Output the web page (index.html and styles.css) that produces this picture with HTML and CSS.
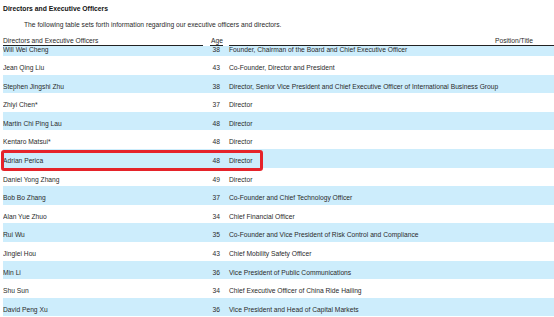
FILE: index.html
```html
<!DOCTYPE html>
<html>
<head>
<meta charset="utf-8">
<link rel="stylesheet" href="styles.css">
</head>
<body>
<div class="page">
  <h1 class="title">Directors and Executive Officers</h1>
  <p class="intro">The following table sets forth information regarding our executive officers and directors.</p>
  <table class="officers">
    <thead>
      <tr>
        <th class="c-name"><span class="ul">Directors and Executive Officers</span></th>
        <th class="c-age"><span class="ul">Age</span></th>
        <th class="c-pos"><span class="ul ul-pos">Position/Title</span></th>
      </tr>
    </thead>
    <tbody>
      <tr class="first alt"><td class="c-name">Will Wei Cheng</td><td class="c-age">38</td><td class="c-pos">Founder, Chairman of the Board and Chief Executive Officer</td></tr>
      <tr><td class="c-name">Jean Qing Liu</td><td class="c-age">43</td><td class="c-pos">Co-Founder, Director and President</td></tr>
      <tr class="alt"><td class="c-name">Stephen Jingshi Zhu</td><td class="c-age">38</td><td class="c-pos">Director, Senior Vice President and Chief Executive Officer of International Business Group</td></tr>
      <tr><td class="c-name">Zhiyi Chen*</td><td class="c-age">37</td><td class="c-pos">Director</td></tr>
      <tr class="alt"><td class="c-name">Martin Chi Ping Lau</td><td class="c-age">48</td><td class="c-pos">Director</td></tr>
      <tr><td class="c-name">Kentaro Matsui*</td><td class="c-age">48</td><td class="c-pos">Director</td></tr>
      <tr class="alt"><td class="c-name">Adrian Perica</td><td class="c-age">48</td><td class="c-pos">Director</td></tr>
      <tr><td class="c-name">Daniel Yong Zhang</td><td class="c-age">49</td><td class="c-pos">Director</td></tr>
      <tr class="alt"><td class="c-name">Bob Bo Zhang</td><td class="c-age">37</td><td class="c-pos">Co-Founder and Chief Technology Officer</td></tr>
      <tr><td class="c-name">Alan Yue Zhuo</td><td class="c-age">34</td><td class="c-pos">Chief Financial Officer</td></tr>
      <tr class="alt"><td class="c-name">Rui Wu</td><td class="c-age">35</td><td class="c-pos">Co-Founder and Vice President of Risk Control and Compliance</td></tr>
      <tr><td class="c-name">Jinglei Hou</td><td class="c-age">43</td><td class="c-pos">Chief Mobility Safety Officer</td></tr>
      <tr class="alt"><td class="c-name">Min Li</td><td class="c-age">36</td><td class="c-pos">Vice President of Public Communications</td></tr>
      <tr><td class="c-name">Shu Sun</td><td class="c-age">34</td><td class="c-pos">Chief Executive Officer of China Ride Hailing</td></tr>
      <tr class="alt"><td class="c-name">David Peng Xu</td><td class="c-age">36</td><td class="c-pos">Vice President and Head of Capital Markets</td></tr>
    </tbody>
  </table>
  <div class="highlight"></div>
</div>
</body>
</html>
```

FILE: styles.css
```css
html, body {
  margin: 0;
  padding: 0;
  background: #ffffff;
}

body {
  font-family: "Liberation Sans", Arial, sans-serif;
  color: #2a2a2a;
  overflow: hidden;
}

.page {
  position: relative;
  padding: 5px 0 0 3px;
  height: 317px;
  box-sizing: border-box;
}

.title {
  margin: 0;
  font-size: 6.8px;
  line-height: 8px;
  font-weight: bold;
  color: #111;
}

.intro {
  margin: 8px 0 0 21px;
  font-size: 6.7px;
  line-height: 8px;
}

.officers {
  margin-top: 8px;
  width: 551px;
  border-collapse: collapse;
  border-spacing: 0;
  table-layout: fixed;
  font-size: 6.7px;
  line-height: 8px;
}

.officers th {
  font-weight: normal;
  padding: 0;
  height: 9px;
  vertical-align: bottom;
}

.officers th .ul {
  display: block;
  border-bottom: 1px solid #222;
}

.officers th.c-name {
  width: 200px;
  text-align: left;
}

.officers th.c-age {
  width: 23px;
  padding-left: 7px;
  padding-right: 3px;
  text-align: right;
  box-sizing: border-box;
}

.officers th.c-pos {
  padding-left: 3px;
  text-align: right;
}

.officers th .ul-pos {
  padding-right: 21px;
}

.officers td {
  padding: 0 0 2.6px 0;
  height: 18.6px;
  box-sizing: border-box;
  vertical-align: bottom;
  white-space: nowrap;
  overflow: hidden;
}

.officers tr.first td {
  height: 10px;
  padding-bottom: 2px;
}

.officers tr.alt td {
  background: #cdedfc;
}

.officers td.c-age {
  text-align: right;
  padding-right: 6px;
}

.officers td.c-pos {
  padding-left: 3px;
}

.highlight {
  position: absolute;
  left: 1px;
  top: 150px;
  width: 262px;
  height: 21px;
  box-sizing: border-box;
  border: 3px solid #e5232a;
  border-radius: 3px;
}
```
